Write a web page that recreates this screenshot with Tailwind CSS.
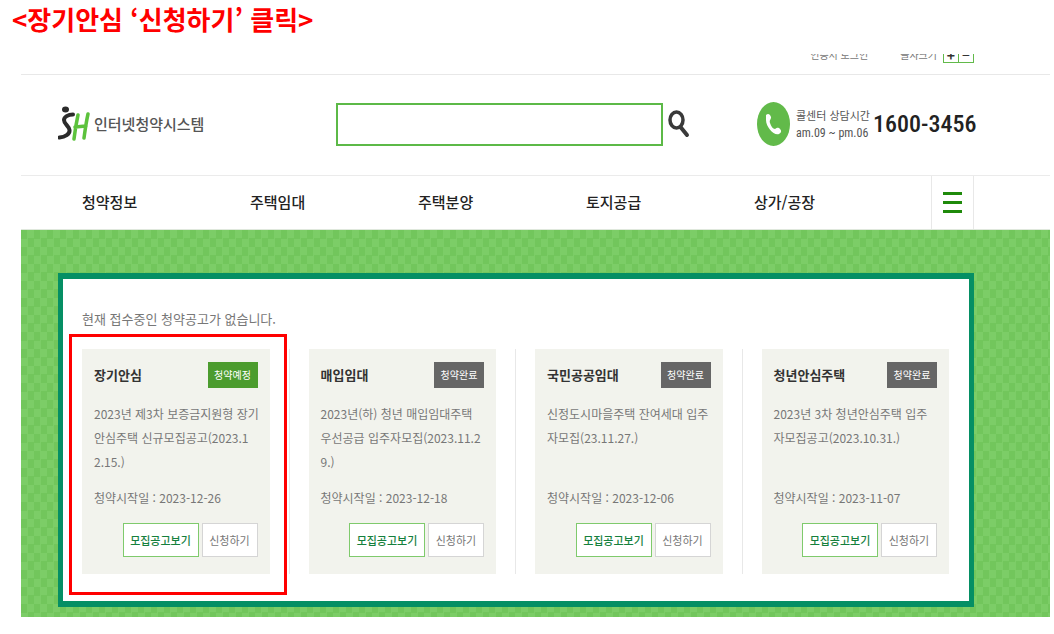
<!DOCTYPE html>
<html lang="ko">
<head>
    <meta charset="UTF-8">
    <meta name="viewport" content="width=device-width, initial-scale=1.0">
    <title>SH 인터넷청약시스템</title>
    <script src="https://cdn.jsdelivr.net/npm/@tailwindcss/browser@4"></script>
</head>
<body class="bg-white text-[#777] font-['Noto_Sans_CJK_KR',sans-serif]">

<h1 class="h-[54px] pl-3 text-[26px] leading-[38px] font-bold text-[#ff0000]">&lt;장기안심 ‘신청하기’ 클릭&gt;</h1>

<div class="ml-[21px] mr-1">
    <!-- 상단 유틸 메뉴 -->
    <div class="h-[21px] overflow-hidden border-b border-[#e8e8e8] pl-[37px] pr-[76px]">
        <div class="-mt-2 flex items-center justify-end text-[10px] leading-4">
            <a href="#" class="mr-8">인증서 로그인</a>
            <span class="mr-1.5">글자크기</span>
            <button type="button" aria-label="글자 크게" class="flex h-[17px] w-4 items-center justify-center border border-[#62ba4a] text-sm font-bold text-[#333]">+</button>
            <button type="button" aria-label="글자 작게" class="flex h-[17px] w-[15px] items-center justify-center border border-l-0 border-[#62ba4a] text-sm text-[#333]">−</button>
        </div>
    </div>

    <!-- 로고 / 검색 / 콜센터 -->
    <header class="flex items-center h-[101px] border-b border-[#ebebeb] pb-0.5 pl-[37px] pr-[76px]">
        <a href="#" class="flex w-[278px] shrink-0 items-center gap-1 text-[15px] font-medium text-[#555]">
            <svg class="h-9 w-8" viewBox="0 0 32 36" fill="none" stroke-linecap="round" stroke-linejoin="round" aria-label="SH">
                <ellipse cx="7.500" cy="3.500" rx="3.500" ry="3" fill="#2b2b2b"/>
                <path d="M15 8.500C10 8.500 6 11 6 14C6 18 11 20 11.500 24C12 28 7 31 1.500 31.500" stroke="#2b2b2b" stroke-width="4"/>
                <path d="M20 9C18 18 17 25 16 33M30 8C28 17 27 25 26 32M17 21L28 20" stroke="#5cc23c" stroke-width="3.500"/>
            </svg>
            <span>인터넷청약시스템</span>
        </a>
        <form class="mr-[67px] flex flex-1 items-center gap-[5px]">
            <input type="text" aria-label="검색어" class="h-[43px] min-w-0 flex-1 border-2 border-[#5cb947] px-2 text-sm outline-none">
            <button type="button" aria-label="검색">
                <svg class="h-7 w-[22px]" viewBox="0 0 22 28" fill="none" stroke="#3a3a3a">
                    <ellipse cx="8.500" cy="10" rx="6.500" ry="8" stroke-width="3.500"/>
                    <path d="M12.500 17L19 25" stroke-width="4" stroke-linecap="round"/>
                </svg>
            </button>
        </form>
        <div class="flex w-[217px] shrink-0 items-center">
            <svg class="mr-1.5 h-11 w-[33px] shrink-0" viewBox="0 0 33 44">
                <ellipse cx="16.500" cy="22" rx="16.500" ry="22" fill="#62ba4a"/>
                <path d="M9 13C11 11 13 12 14 15C14.500 17 12 18 13 21C14 24 16 27 18 27C20 26 21 25 23 27C25 29 24 31 22 32C17 34 9 25 9 18Z" fill="#fff"/>
            </svg>
            <div class="w-[77px] shrink-0 whitespace-nowrap text-[11px] leading-[18px] text-[#555]">
                <p>콜센터 상담시간</p>
                <p class="text-xs leading-[18px] font-['Roboto_Condensed',sans-serif]">am.09 ~ pm.06</p>
            </div>
            <span class="whitespace-nowrap text-2xl font-medium text-[#222] font-['Roboto_Condensed',sans-serif]">1600-3456</span>
        </div>
    </header>

    <nav class="flex h-[54px] border-b border-[#dfe8dc] pl-[61px] pr-[76px]">
        <ul class="mr-[9px] grid flex-1 grid-cols-5 items-center text-[15px] font-medium text-[#222]">
            <li><a href="#">청약정보</a></li>
            <li><a href="#">주택임대</a></li>
            <li><a href="#">주택분양</a></li>
            <li><a href="#">토지공급</a></li>
            <li><a href="#">상가/공장</a></li>
        </ul>
        <button type="button" aria-label="전체메뉴" class="flex w-[43px] flex-col items-center justify-center gap-1.5 border-x border-[#e8e8e8]">
            <span class="h-[3px] w-[19px] bg-[#1f8a0b]"></span>
            <span class="h-[3px] w-[19px] bg-[#1f8a0b]"></span>
            <span class="h-[3px] w-[19px] bg-[#1f8a0b]"></span>
        </button>
    </nav>

    <main class="bg-[repeating-conic-gradient(#7ccd67_0_25%,#72c65c_0_50%)] bg-[length:13px_17px] pt-[43px] pr-[76px] pb-2.5 pl-[37px]">
        <section class="border-x-5 border-y-6 border-[#058f64] bg-white pt-7 pr-5 pb-[27px] pl-[19px]">
            <p class="mb-[18px] text-[13px] leading-6">현재 접수중인 청약공고가 없습니다.</p>

            <div class="flex gap-[19px]">
                <article class="relative flex min-w-0 flex-1 flex-col bg-[#f2f3ed] px-3 pt-[13px] pb-[17px]">
                    <div class="flex items-center justify-between">
                        <h2 class="text-[13px] font-bold text-[#333]">장기안심</h2>
                        <span class="w-[50px] bg-[#4c9c2e] text-center text-[10px] leading-[26px] text-white">청약예정</span>
                    </div>
                    <p class="mt-3.5 h-[72px] whitespace-nowrap text-xs leading-6">2023년 제3차 보증금지원형 장기<br>안심주택 신규모집공고(2023.1<br>2.15.)</p>
                    <p class="mt-3 whitespace-nowrap text-xs leading-6">청약시작일 : 2023-12-26</p>
                    <div class="mt-[13px] flex justify-end gap-[3px] text-[11px]">
                        <button type="button" class="h-[34px] w-[76px] border border-[#7fca6c] bg-white font-medium text-[#15803d]">모집공고보기</button>
                        <button type="button" class="h-[34px] w-14 border border-[#d5d5d5] bg-white">신청하기</button>
                    </div>
                    <!-- 클릭 위치 강조 -->
                    <div class="pointer-events-none absolute -top-[15px] -right-[17px] -bottom-[21px] -left-[13px] border-3 border-[#ff0000]"></div>
                </article>

                <div class="w-px bg-[#e8e8e8]"></div>

                <article class="flex min-w-0 flex-1 flex-col bg-[#f2f3ed] px-3 pt-[13px] pb-[17px]">
                    <div class="flex items-center justify-between">
                        <h2 class="text-[13px] font-bold text-[#333]">매입임대</h2>
                        <span class="w-[50px] bg-[#666] text-center text-[10px] leading-[26px] text-white">청약완료</span>
                    </div>
                    <p class="mt-3.5 h-[72px] whitespace-nowrap text-xs leading-6">2023년(하) 청년 매입임대주택<br>우선공급 입주자모집(2023.11.2<br>9.)</p>
                    <p class="mt-3 whitespace-nowrap text-xs leading-6">청약시작일 : 2023-12-18</p>
                    <div class="mt-[13px] flex justify-end gap-[3px] text-[11px]">
                        <button type="button" class="h-[34px] w-[76px] border border-[#7fca6c] bg-white font-medium text-[#15803d]">모집공고보기</button>
                        <button type="button" class="h-[34px] w-14 border border-[#d5d5d5] bg-white">신청하기</button>
                    </div>
                </article>

                <div class="w-px bg-[#e8e8e8]"></div>

                <article class="flex min-w-0 flex-1 flex-col bg-[#f2f3ed] px-3 pt-[13px] pb-[17px]">
                    <div class="flex items-center justify-between">
                        <h2 class="text-[13px] font-bold text-[#333]">국민공공임대</h2>
                        <span class="w-[50px] bg-[#666] text-center text-[10px] leading-[26px] text-white">청약완료</span>
                    </div>
                    <p class="mt-3.5 h-[72px] whitespace-nowrap text-xs leading-6">신정도시마을주택 잔여세대 입주<br>자모집(23.11.27.)</p>
                    <p class="mt-3 whitespace-nowrap text-xs leading-6">청약시작일 : 2023-12-06</p>
                    <div class="mt-[13px] flex justify-end gap-[3px] text-[11px]">
                        <button type="button" class="h-[34px] w-[76px] border border-[#7fca6c] bg-white font-medium text-[#15803d]">모집공고보기</button>
                        <button type="button" class="h-[34px] w-14 border border-[#d5d5d5] bg-white">신청하기</button>
                    </div>
                </article>

                <div class="w-px bg-[#e8e8e8]"></div>

                <article class="flex min-w-0 flex-1 flex-col bg-[#f2f3ed] px-3 pt-[13px] pb-[17px]">
                    <div class="flex items-center justify-between">
                        <h2 class="text-[13px] font-bold text-[#333]">청년안심주택</h2>
                        <span class="w-[50px] bg-[#666] text-center text-[10px] leading-[26px] text-white">청약완료</span>
                    </div>
                    <p class="mt-3.5 h-[72px] whitespace-nowrap text-xs leading-6">2023년 3차 청년안심주택 입주<br>자모집공고(2023.10.31.)</p>
                    <p class="mt-3 whitespace-nowrap text-xs leading-6">청약시작일 : 2023-11-07</p>
                    <div class="mt-[13px] flex justify-end gap-[3px] text-[11px]">
                        <button type="button" class="h-[34px] w-[76px] border border-[#7fca6c] bg-white font-medium text-[#15803d]">모집공고보기</button>
                        <button type="button" class="h-[34px] w-14 border border-[#d5d5d5] bg-white">신청하기</button>
                    </div>
                </article>
            </div>
        </section>
    </main>
</div>

</body>
</html>
